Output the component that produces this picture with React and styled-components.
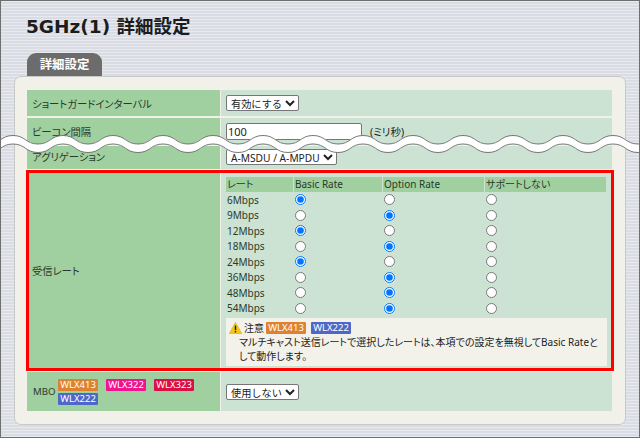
import React from 'react';
import styled, { createGlobalStyle } from 'styled-components';

const GlobalStyle = createGlobalStyle`
  html, body {
    margin: 0;
    padding: 0;
  }
  body {
    font-family: "Noto Sans", "Noto Sans CJK JP", sans-serif;
    font-feature-settings: "palt";
    font-size: 10px;
    color: #222;
  }
`;

const Page = styled.div`
  position: relative;
  box-sizing: border-box;
  width: 640px;
  height: 438px;
  overflow: hidden;
  border: 1px solid #6f6f6f;
  padding: 0 13px 0 13px;
  background-color: #e0e2e9;
  background-image: repeating-linear-gradient(
    180deg,
    rgba(255, 255, 255, 0.28) 0,
    rgba(255, 255, 255, 0.28) 1px,
    rgba(120, 125, 140, 0.06) 1px,
    rgba(120, 125, 140, 0.06) 3px
  );
`;

const Title = styled.h1`
  margin: 0;
  padding: 13px 0 0 12px;
  height: 39px;
  box-sizing: border-box;
  font-size: 18.5px;
  line-height: 26px;
  font-weight: 700;
  color: #1c1c1c;
  font-family: "DejaVu Sans", "Noto Sans CJK JP", sans-serif;
  font-feature-settings: normal;
  white-space: nowrap;
`;

const Tab = styled.div`
  box-sizing: border-box;
  width: 75px;
  height: 23px;
  margin-left: 13px;
  margin-top: 13px;
  background: #6c6c6c;
  border-radius: 9px 9px 0 0;
  color: #fff;
  font-size: 12.4px;
  font-weight: 700;
  line-height: 23px;
  text-align: center;
  font-feature-settings: normal;
`;

const Panel = styled.div`
  box-sizing: border-box;
  width: 612px;
  height: 349px;
  padding: 13px 12px 0 12px;
  background: #f1f1ea;
  border: 1px solid #c9c9c9;
  border-radius: 7px;
  display: flex;
  flex-direction: column;
  gap: 2px;
`;

const Row = styled.div`
  display: grid;
  grid-template-columns: 193px 391px;
  column-gap: 1px;
  height: ${(p) => p.$height}px;
  ${(p) => p.$marked && 'outline: 3px solid #f00; outline-offset: -2px; position: relative;'}
  ${(p) => p.$raised && '& > * { padding-bottom: 2px; }'}
`;

const Label = styled.div`
  display: flex;
  align-items: center;
  gap: 4px;
  padding-left: 5px;
  background: #a0cfa0;
  font-size: 10.3px;
  color: #2a3a2a;
`;

const Value = styled.div`
  display: flex;
  align-items: center;
  gap: 8px;
  padding-left: 5px;
  background: #cce2d2;
  font-size: 10.5px;
`;

const RateCell = styled(Value)`
  display: block;
  padding: 6px 6px 0 5px;
`;

const Select = styled.select`
  font-family: "Noto Sans", "Noto Sans CJK JP", sans-serif;
  font-size: 10.2px;
  height: 16px;
  padding: 0;
  background: #fff;
  border: 1px solid #767676;
  border-radius: 2px;
  color: #222;
`;

const TextInput = styled.input`
  box-sizing: border-box;
  width: 136px;
  height: 17px;
  padding: 0 1px;
  font-family: "Noto Sans", sans-serif;
  font-size: 11px;
  border: 1px solid #767676;
  border-radius: 2px;
  background: #fff;
  color: #222;
`;

const RateGrid = styled.div`
  display: grid;
  grid-template-columns: 67px 88px 101px 121px;
  column-gap: 1px;
  grid-auto-rows: 14.5px;
  row-gap: 1px;
  width: 380px;
`;

const HeadCell = styled.div`
  background: #a0cfa0;
  padding-left: 1px;
  line-height: 14.5px;
  font-size: 10px;
  color: #2a3a2a;
`;

const RateName = styled.div`
  padding-left: 1px;
  line-height: 14.5px;
  font-size: 10px;
  color: #2a3a2a;
`;

const RadioCell = styled.div`
  display: flex;
  align-items: center;
`;

const Radio = styled.input`
  margin: 0 0 0 1px;
  width: 11px;
  height: 11px;
`;

const Note = styled.div`
  box-sizing: border-box;
  width: 381px;
  height: 48px;
  margin-top: 2px;
  padding: 3px 3px 0 3px;
  background: #f2f2ea;
  font-size: 10px;
  line-height: 14px;
  color: #222;
`;

const NoteHead = styled.div`
  display: flex;
  align-items: center;
  gap: 2px;
  height: 14px;
`;

const NoteBody = styled.div`
  padding-left: 10px;
  white-space: nowrap;
`;

const Badge = styled.span`
  display: inline-block;
  box-sizing: border-box;
  width: 40px;
  height: 12px;
  line-height: 12px;
  text-align: center;
  border-radius: 1px;
  font-size: 9.5px;
  font-family: "Noto Sans", sans-serif;
  color: #fff;
  background: ${(p) => p.$color};
`;

const NextBadge = styled(Badge)`
  margin-left: 3px;
`;

const MboName = styled.span`
  width: 21px;
  margin-left: 1px;
  font-size: 9.6px;
`;

const BadgeGroup = styled.div`
  display: flex;
  flex-wrap: wrap;
  gap: 2px 8px;
  width: 140px;
`;

const WaveBreak = styled.svg`
  position: absolute;
  left: -1px;
  top: 129px;
  display: block;
`;

const rates = [
  ['6Mbps', 'basic'],
  ['9Mbps', 'option'],
  ['12Mbps', 'basic'],
  ['18Mbps', 'option'],
  ['24Mbps', 'basic'],
  ['36Mbps', 'option'],
  ['48Mbps', 'option'],
  ['54Mbps', 'option'],
];

const choices = ['basic', 'option', 'none'];

const BADGE = {
  WLX413: '#df8230',
  WLX322: '#f0148f',
  WLX323: '#dc0f46',
  WLX222: '#4d68c6',
};

// top edge of the break line, one hump every 50px
const wavePath = (dy) => {
  let d = `M-62 ${14 + dy}`;
  for (let x = -62; x < 660; x += 25) {
    const up = (x + 62) % 50 === 0;
    const from = (up ? 14 : 5.5) + dy;
    const to = (up ? 5.5 : 14) + dy;
    d += ` C${x + 12.5} ${from} ${x + 12.5} ${to} ${x + 25} ${to}`;
  }
  return d;
};

const WarnIcon = () => (
  <svg width="13" height="12" viewBox="0 0 13 12">
    <path d="M6.5 0.5 L12.7 11.5 H0.3 Z" fill="#f5c518" stroke="#e0a800" strokeWidth="0.6" strokeLinejoin="round" />
    <rect x="5.8" y="3.6" width="1.4" height="4.6" fill="#222" />
    <rect x="5.8" y="9" width="1.4" height="1.4" fill="#222" />
  </svg>
);

const App = () => (
  <Page>
    <GlobalStyle />
    <Title>5GHz(1) 詳細設定</Title>
    <Tab>詳細設定</Tab>
    <Panel>
      <Row $height={26}>
        <Label>ショートガードインターバル</Label>
        <Value>
          <Select defaultValue="on">
            <option value="on">有効にする</option>
          </Select>
        </Value>
      </Row>
      <Row $height={26}>
        <Label>ビーコン間隔</Label>
        <Value>
          <TextInput defaultValue="100" />
          <span>(ミリ秒)</span>
        </Value>
      </Row>
      <Row $height={23} $raised>
        <Label>アグリゲーション</Label>
        <Value>
          <Select defaultValue="both">
            <option value="both">A-MSDU / A-MPDU</option>
          </Select>
        </Value>
      </Row>
      <Row $height={199} $marked>
        <Label>受信レート</Label>
        <RateCell>
          <RateGrid>
            <HeadCell>レート</HeadCell>
            <HeadCell>Basic Rate</HeadCell>
            <HeadCell>Option Rate</HeadCell>
            <HeadCell>サポートしない</HeadCell>
            {rates.map(([name, selected]) => (
              <React.Fragment key={name}>
                <RateName>{name}</RateName>
                {choices.map((choice) => (
                  <RadioCell key={choice}>
                    <Radio type="radio" name={name} defaultChecked={selected === choice} />
                  </RadioCell>
                ))}
              </React.Fragment>
            ))}
          </RateGrid>
          <Note>
            <NoteHead>
              <WarnIcon />
              <span>注意</span>
              <Badge $color={BADGE.WLX413}>WLX413</Badge>
              <NextBadge $color={BADGE.WLX222}>WLX222</NextBadge>
            </NoteHead>
            <NoteBody>
              マルチキャスト送信レートで選択したレートは、本項での設定を無視してBasic Rateと
              <br />
              して動作します。
            </NoteBody>
          </Note>
        </RateCell>
      </Row>
      <Row $height={39}>
        <Label>
          <MboName>MBO</MboName>
          <BadgeGroup>
            <Badge $color={BADGE.WLX413}>WLX413</Badge>
            <Badge $color={BADGE.WLX322}>WLX322</Badge>
            <Badge $color={BADGE.WLX323}>WLX323</Badge>
            <Badge $color={BADGE.WLX222}>WLX222</Badge>
          </BadgeGroup>
        </Label>
        <Value>
          <Select defaultValue="off">
            <option value="off">使用しない</option>
          </Select>
        </Value>
      </Row>
    </Panel>
    <WaveBreak width="642" height="30" viewBox="0 0 642 30">
      <path d={wavePath(4.25)} fill="none" stroke="#fff" strokeWidth="8" />
      <path d={wavePath(0)} fill="none" stroke="#777" strokeWidth="1" />
      <path d={wavePath(8.5)} fill="none" stroke="#777" strokeWidth="1" />
    </WaveBreak>
  </Page>
);

export default App;
